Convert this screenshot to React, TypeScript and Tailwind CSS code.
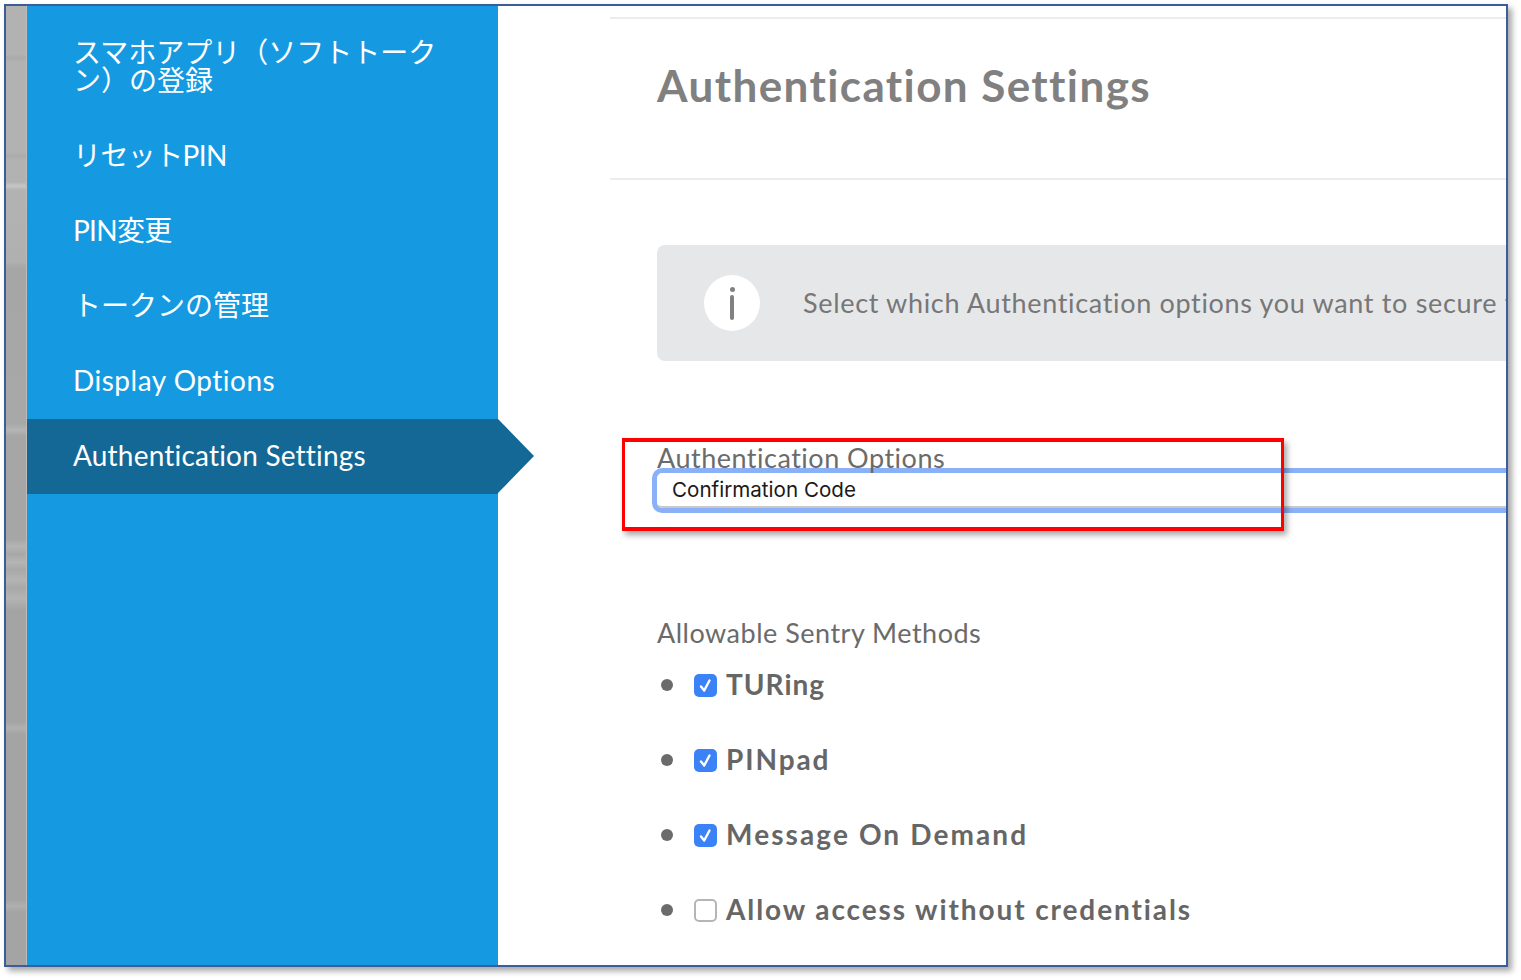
const navFont = "font-['Lato','Noto_Sans_CJK_JP',sans-serif]";

const navItems = [
  { label: "リセットPIN", cls: "h-[75px] tracking-[-0.6px]" },
  { label: "PIN変更", cls: "h-[75px] tracking-[-0.7px]" },
  { label: "トークンの管理", cls: "h-[75px]" },
  { label: "Display Options", cls: "h-[76px] tracking-[0.5px]" },
];

const methods = [
  { label: "TURing", checked: true, cls: "tracking-[1px]" },
  { label: "PINpad", checked: true, cls: "tracking-[1.9px]" },
  { label: "Message On Demand", checked: true, cls: "tracking-[2.1px]" },
  { label: "Allow access without credentials", checked: false, cls: "tracking-[1.9px]" },
];

function Sidebar() {
  return (
    <aside className={`w-[471px] shrink-0 bg-[#159ae1] text-white text-[28px] ${navFont}`}>
      <div className="pl-[46px] pr-[50px] pt-[32px] h-[112px] text-[28px] leading-[28px]">
        スマホアプリ（ソフトトークン）の登録
      </div>
      {navItems.map((item) => (
        <div key={item.label} className={`pl-[46px] pb-[2px] flex items-center ${item.cls}`}>
          {item.label}
        </div>
      ))}
      <div className="relative pl-[46px] pb-[3px] h-[75px] flex items-center bg-[#146896] tracking-[0.2px]">
        Authentication Settings
        <div className="absolute left-full top-0 w-0 h-0 border-y-[37.5px] border-y-transparent border-l-[36px] border-l-[#146896]" />
      </div>
    </aside>
  );
}

function Checkbox({ checked }: { checked: boolean }) {
  if (!checked) {
    return <span className="block w-[23px] h-[23px] rounded-[5px] border-2 border-[#b5b5b5] bg-white" />;
  }
  return (
    <span className="w-[23px] h-[23px] rounded-[5px] bg-[#3b82f6] flex items-center justify-center">
      <svg width="15" height="15" viewBox="0 0 15 15" fill="none">
        <path d="M3 8.5 L6.2 12.5 L11.5 2.5" stroke="white" strokeWidth="2.4" strokeLinecap="round" strokeLinejoin="round" />
      </svg>
    </span>
  );
}

export default function App() {
  return (
    <div className="w-[1521px] h-[980px] bg-white pt-[4px] pl-[4px] overflow-hidden">
      <div className="relative w-[1504px] h-[963px] border-2 border-[#3d5c9c] bg-white flex overflow-hidden shadow-[4px_4px_6px_rgba(0,0,0,0.35)]">
        {/* blurred page edge behind the sidebar */}
        <div className="w-[21px] shrink-0 border-r border-[#bcbcbc] bg-[linear-gradient(180deg,#b2b2b2_0,#b2b2b2_48px,#aaaaaa_52px,#b2b2b2_56px,#b2b2b2_146px,#ababab_150px,#b2b2b2_154px,#b2b2b2_176px,#abababab_180px,#b2b2b2_184px,#b0b0b0_256px,#a6a6a6_262px,#a8a8a8_418px,#b6b6b6_424px,#a6a6a6_430px,#a6a6a6_533px,#b4b4b4_540px,#a8a8a8_548px,#b4b4b4_556px,#a8a8a8_564px,#b4b4b4_574px,#a8a8a8_582px,#b4b4b4_592px,#a4a4a4_604px,#a4a4a4_716px,#b0b0b0_722px,#a4a4a4_728px,#a4a4a4_894px,#b0b0b0_900px,#a4a4a4_906px,#a4a4a4_100%)]" />
        <Sidebar />
        <main className={`flex-1 min-w-0 pl-[112px] pt-[11px] text-[#6b6b6b] overflow-hidden ${navFont}`}>
          <div className="border-y-2 border-[#ececec] h-[163px] pl-[47px] pt-[34px]">
            <h1 className="text-[44px] leading-[64px] font-bold text-[#808080] tracking-[1.4px] whitespace-nowrap">
              Authentication Settings
            </h1>
          </div>
          <div className="pl-[47px]">
            <div className="mt-[65px] h-[116px] w-[1000px] rounded-l-[8px] bg-[#e6e7e9] flex items-center pl-[47px] gap-[43px]">
              <span className="w-[56px] h-[56px] rounded-full bg-white flex flex-col items-center justify-center gap-[3px] shrink-0">
                <span className="w-[5px] h-[5px] rounded-full bg-[#808080]" />
                <span className="w-[4px] h-[25px] rounded-full bg-[#808080]" />
              </span>
              <span className="text-[27px] tracking-[0.67px] whitespace-nowrap text-[#777]">
                Select which Authentication options you want to secure the
              </span>
            </div>
            <label className="block mt-[80px] text-[27px] leading-[34px] tracking-[0.5px] text-[#6b6b6b] relative z-10">
              Authentication Options
            </label>
            <div className="-mt-[7px] -ml-[5px] h-[45px] w-[1000px] rounded-l-[10px] border-[5px] border-r-0 border-[#8ab1f7] bg-white">
              <div className="h-full rounded-l-[5px] border-b-2 border-[#c9c9c9] flex items-center pl-[15px] pt-[2px]">
                <span className="text-[#1a1a1a] text-[20.6px] font-['Inter',sans-serif]">Confirmation Code</span>
              </div>
            </div>
            <div className="mt-[103px] text-[27px] leading-[34px] tracking-[0.5px] text-[#6b6b6b]">Allowable Sentry Methods</div>
            <ul className="mt-[17px]">
              {methods.map((m) => (
                <li key={m.label} className="h-[75px] flex items-start pt-[3px]">
                  <span className="w-[12px] h-[12px] mt-[9px] ml-[4px] mr-[21px] rounded-full bg-[#6b6b6b] shrink-0" />
                  <span className="mr-[9px] mt-[4px] shrink-0"><Checkbox checked={m.checked} /></span>
                  <span className={`text-[28px] leading-[28px] font-bold text-[#666] ${m.cls}`}>{m.label}</span>
                </li>
              ))}
            </ul>
          </div>
        </main>
        <div className="absolute left-[616px] top-[432px] w-[662px] h-[93px] border-y-4 border-x-[3px] border-[#fe0000] shadow-[3px_4px_6px_rgba(0,0,0,0.35)]" />
      </div>
    </div>
  );
}
